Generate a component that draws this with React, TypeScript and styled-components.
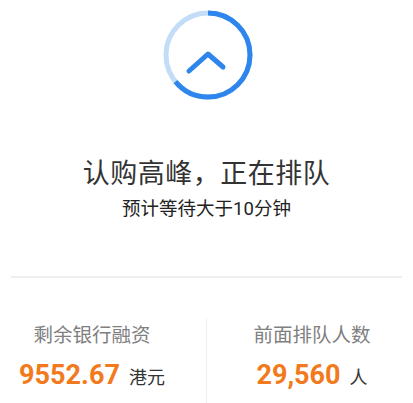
import React from 'react';
import styled, { createGlobalStyle } from 'styled-components';

const GlobalStyle = createGlobalStyle`
    html, body {
        margin: 0;
        padding: 0;
        background: #ffffff;
    }
    body {
        font-family: Roboto, "Noto Sans CJK SC", sans-serif;
    }
`;

const Page = styled.div`
    width: 413px;
    height: 403px;
    overflow: hidden;
    display: flex;
    flex-direction: column;
    align-items: center;
`;

const Spinner = styled.div`
    margin-top: 8px;
    width: 94px;
    height: 94px;
    margin-left: 2px;
`;

const Title = styled.div`
    margin-top: 55px;
    font-size: 27px;
    line-height: 34px;
    color: #333333;
    letter-spacing: 0.5px;
`;

const Subtitle = styled.div`
    margin-top: 6px;
    font-size: 18.5px;
    line-height: 24px;
    color: #222222;
`;

const Divider = styled.div`
    margin-top: 55px;
    width: 391px;
    height: 2px;
    background: #eeeeee;
`;

const Stats = styled.div`
    margin-top: 41px;
    width: 100%;
    display: grid;
    grid-template-columns: 206px 1px 1fr;
`;

const Stat = styled.div<{ $left: number; $right: number }>`
    display: flex;
    flex-direction: column;
    align-items: center;
    padding: 4px ${p => p.$right}px 0 ${p => p.$left}px;
`;

const Rule = styled.div`
    background: #eeeeee;
    height: 84px;
`;

const Label = styled.div`
    font-size: 19.5px;
    line-height: 26px;
    color: #808080;
`;

const Value = styled.div`
    margin-top: 10px;
    display: flex;
    align-items: baseline;
    gap: 9px;
`;

const Number = styled.span`
    font-size: 27px;
    font-weight: 700;
    color: #f27a1c;
`;

const Unit = styled.span`
    font-size: 18px;
    color: #333333;
`;

const R = 42;
const C = 2 * Math.PI * R;

const QueueSpinner = () => (
    <Spinner>
        <svg width="94" height="94" viewBox="0 0 94 94">
            <circle cx="47" cy="47" r={R} fill="none" stroke="#c3dcf7" strokeWidth="5" />
            <circle
                cx="47"
                cy="47"
                r={R}
                fill="none"
                stroke="#2e86ec"
                strokeWidth="5"
                strokeDasharray={`${C * 0.64} ${C}`}
                transform="rotate(-90 47 47)"
            />
            <polyline
                points="28,63 47,46 62,59"
                fill="none"
                stroke="#2e86ec"
                strokeWidth="5"
                strokeLinecap="round"
                strokeLinejoin="round"
            />
        </svg>
    </Spinner>
);

const App = () => (
    <>
        <GlobalStyle />
        <Page>
            <QueueSpinner />
            <Title>认购高峰，正在排队</Title>
            <Subtitle>预计等待大于10分钟</Subtitle>
            <Divider />
            <Stats>
                <Stat $left={0} $right={22}>
                    <Label>剩余银行融资</Label>
                    <Value>
                        <Number>9552.67</Number>
                        <Unit>港元</Unit>
                    </Value>
                </Stat>
                <Rule />
                <Stat $left={4} $right={0}>
                    <Label>前面排队人数</Label>
                    <Value>
                        <Number>29,560</Number>
                        <Unit>人</Unit>
                    </Value>
                </Stat>
            </Stats>
        </Page>
    </>
);

export default App;
